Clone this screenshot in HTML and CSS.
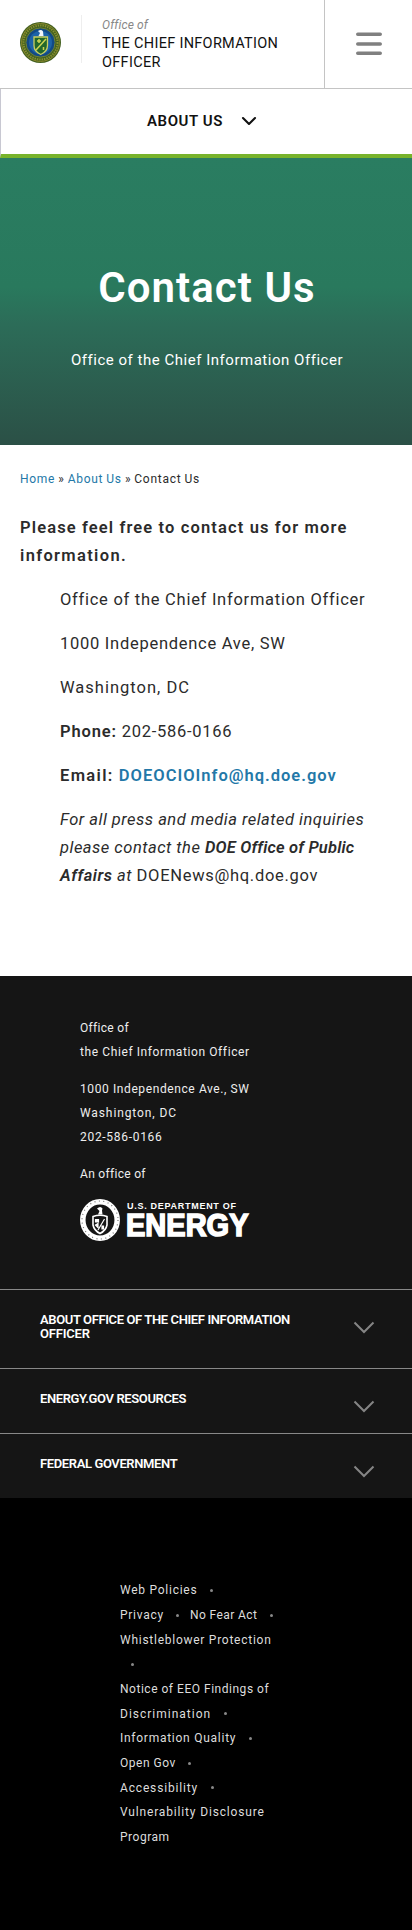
FILE: index.html
```html
<!DOCTYPE html>
<html lang="en">
<head>
<meta charset="utf-8">
<meta name="viewport" content="width=device-width, initial-scale=1">
<title>Contact Us</title>
<link rel="stylesheet" href="styles.css">
</head>
<body>
<header class="top">
  <a class="brand">
    <svg class="seal" viewBox="0 0 41 41">
      <circle cx="20.5" cy="20.5" r="20.5" fill="#43601f"/>
      <circle cx="20.5" cy="20.5" r="18.9" fill="none" stroke="#8d8a2c" stroke-width="1"/>
      <circle cx="20.5" cy="20.5" r="17" fill="none" stroke="#87902f" stroke-width="2" stroke-dasharray="1.4 1"/>
      <circle cx="20.5" cy="20.5" r="14.6" fill="#124a86" stroke="#6f8233" stroke-width="1"/>
      <circle cx="20.5" cy="20.5" r="11.5" fill="#1d63a8"/>
      <path d="M14 15h13.500v8.500q0 6-6.750 9q-6.750-3-6.750-9z" fill="#23682b" stroke="#c9cf62" stroke-width="1.300"/>
      <path d="M16 28L26 17M19 17v4M17 19h4M23.500 25v3" stroke="#cdd452" stroke-width="1.500" fill="none"/>
      <path d="M18 9q3.500-2 5 .5l.5 4.500h-5l1.500-3z" fill="#f1f5fa"/>
    </svg>
    <span class="rule"></span>
    <span class="name"><em>Office of</em><span class="title">THE CHIEF INFORMATION<br>OFFICER</span></span>
  </a>
  <button class="menu" aria-label="Menu"><svg width="26" height="24" viewBox="0 0 26 24"><path d="M1.800 2.300h22.400M1.800 12h22.400M1.800 21.300h22.400" stroke="#808080" stroke-width="3.600" stroke-linecap="round"/></svg></button>
</header>
<nav class="section-nav">
  <span>ABOUT US</span>
  <svg width="16" height="10" viewBox="0 0 16 10"><path d="M2 2l6 6 6-6" fill="none" stroke="#111" stroke-width="2.100" stroke-linecap="round" stroke-linejoin="round"/></svg>
</nav>
<section class="hero">
  <h1>Contact Us</h1>
  <p>Office of the Chief Information Officer</p>
</section>
<main class="content">
  <div class="crumbs"><a>Home</a> » <a>About Us</a> » <span>Contact Us</span></div>
  <p class="lead"><strong>Please feel free to contact us for more<br><span class="ls-13">information.</span></strong></p>
  <div class="indent">
    <p>Office of the Chief Information Officer</p>
    <p>1000 Independence Ave, SW</p>
    <p class="ls-10">Washington, DC</p>
    <p class="phone"><strong>Phone:</strong> 202-586-0166</p>
    <p><strong><span class="ls-13">Email:</span> <a class="ls-10">DOEOCIOInfo@hq.doe.gov</a></strong></p>
    <p class="press"><em>For all press and media related inquiries<br>please contact the <strong>DOE Office of Public<br><span class="ls-5">Affairs</span></strong> at</em> <span class="ls-7">DOENews@hq.doe.gov</span></p>
  </div>
</main>
<footer>
  <section class="office">
    <p><span class="ls-3">Office of</span><br>the Chief Information Officer</p>
    <p>1000 Independence Ave., SW<br><span class="ls-9">Washington, DC</span><br><span class="ls-7">202-586-0166</span></p>
    <p class="ls-3">An office of</p>
    <svg class="logo" width="170" height="42" viewBox="0 0 170 42">
      <ellipse cx="20" cy="21" rx="17.200" ry="18.200" fill="none" stroke="#fff" stroke-width="5.500"/>
      <ellipse cx="20" cy="21" rx="18" ry="19" fill="none" stroke="#777" stroke-width="1.200" stroke-dasharray="1 3.500"/>
      <path d="M13 17.500q7-2.500 14 0v8.500q-1 5.500-7 8.500q-6-3-7-8.500z" fill="#151515" stroke="#fff" stroke-width="1.600"/>
      <path d="M15.500 20.500h3v2.500h-3zM18 31l6.500-11M22 27h1.500v3H22zM15.500 26l2.500-1.500v4z" fill="#fff" stroke="#fff" stroke-width="1.200"/>
      <path d="M17 9.500q3.500-3 5.500 0l-.5 2 .5 4h-4.500l1.500-3.500z" fill="#fff"/>
      <text x="47" y="10" class="dept" textLength="109" lengthAdjust="spacing">U.S. DEPARTMENT OF</text>
      <text x="46" y="37.300" class="energy" textLength="122.500" lengthAdjust="spacingAndGlyphs">ENERGY</text>
    </svg>
  </section>
  <section class="fold two"><h2>ABOUT OFFICE OF THE CHIEF INFORMATION<br><span class="tail">OFFICER</span></h2><svg class="chev" viewBox="0 0 22 13"><path d="M1.500 1.500L11 11l9.500-9.500"/></svg></section>
  <section class="fold"><h2>ENERGY.GOV RESOURCES</h2><svg class="chev" viewBox="0 0 22 13"><path d="M1.500 1.500L11 11l9.500-9.500"/></svg></section>
  <section class="fold"><h2>FEDERAL GOVERNMENT</h2><svg class="chev" viewBox="0 0 22 13"><path d="M1.500 1.500L11 11l9.500-9.500"/></svg></section>
  <section class="legal">
    <div><a>Web Policies</a><i></i></div>
    <div><a>Privacy</a><i></i><a class="next ls-4">No Fear Act</a><i></i></div>
    <div><a>Whistleblower Protection</a></div>
    <div class="lone"><i></i></div>
    <div class="tight"><a class="ls-5">Notice of EEO Findings of</a></div>
    <div><a class="ls-10">Discrimination</a><i></i></div>
    <div><a>Information Quality</a><i></i></div>
    <div><a class="ls-5">Open Gov</a><i></i></div>
    <div><a class="ls-8">Accessibility</a><i></i></div>
    <div class="tight"><a class="ls-8">Vulnerability Disclosure</a></div>
    <div><a class="ls-5">Program</a></div>
  </section>
</footer>
</body>
</html>
```
FILE: styles.css
```css
* { box-sizing: border-box; }
body { margin: 0; background: #fff; color: #2b2b2b; font-family: Roboto, sans-serif; }
p, h1, h2 { margin: 0; }
strong { font-weight: 600; letter-spacing: 1.13px; }

.top { display: flex; height: 89px; border-bottom: 1px solid #c4c4c4; }
.brand { display: flex; width: 324px; padding-left: 20px; }
.seal { width: 41px; height: 41px; margin-top: 22px; }
.rule { width: 1px; height: 48px; margin: 15px 20px 0; background: #eee; }
.name { padding-top: 17px; }
.name em { display: block; font-size: 12px; line-height: 17px; letter-spacing: .13px; color: #888; }
.title { display: block; font-size: 14.5px; line-height: 19px; letter-spacing: .3px; color: #111; }
.menu { width: 88px; padding: 0 0 1px; border: 0; border-left: 1px solid #c4c4c4; background: none; }
.menu svg { display: block; margin: auto; }

.section-nav { display: flex; align-items: center; gap: 18px; height: 69px; padding: 0 0 2px 146px; border-left: 1px solid #c8c8d2; border-bottom: 4px solid #78b32b; color: #111; font-size: 15px; font-weight: 600; letter-spacing: .58px; }

.hero { height: 287px; padding: 94px 0 0 2px; text-align: center; color: #fff; background: linear-gradient(#2a7d61 0, #29795d 45%, #2c6c58 58%, #2b5046 100%); }
.hero h1 { font-size: 42px; line-height: 72px; font-weight: 600; letter-spacing: 1.05px; }
.hero p { margin-top: 23px; font-size: 15px; line-height: 26px; letter-spacing: .52px; }

.content { height: 531px; padding: 25px 20px 0; }
.crumbs { font-size: 12px; line-height: 18px; letter-spacing: .72px; word-spacing: -.6px; }
.content a { color: #2378a8; }
.content p { font-size: 16.5px; line-height: 28px; margin-bottom: 16px; letter-spacing: .73px; white-space: nowrap; }
.content .lead { margin-top: 26px; }
.indent { padding-left: 40px; }
.phone strong { letter-spacing: .85px; }
.content .press { letter-spacing: .5px; }
.press strong { letter-spacing: .18px; }

.office { height: 313px; padding: 40px 80px 0; background: #151515; color: #eee; font-size: 12px; line-height: 24px; letter-spacing: .6px; white-space: nowrap; }
.office p { margin-bottom: 13px; }
.logo { display: block; overflow: visible; letter-spacing: 0; line-height: 1; }
.dept { font: bold 9px "Liberation Sans", sans-serif; fill: #fff; }
.energy { font: bold 31px "Liberation Sans", sans-serif; fill: #fff; stroke: #fff; stroke-width: 1.6px; }

.fold { display: flex; justify-content: space-between; height: 65px; padding: 23px 37px 0 40px; border-top: 1px solid #888; background: #151515; color: #fff; }
.fold.two { height: 79px; }
.fold h2 { font-size: 13px; line-height: 14px; font-weight: 600; letter-spacing: -.38px; }
.fold .tail { letter-spacing: -.2px; }
.chev { width: 22px; height: 13px; margin-top: 8px; fill: none; stroke: #858585; stroke-width: 2px; }

.legal { height: 432px; padding: 80px 120px 0; background: #000; color: #ddd; font-size: 12px; letter-spacing: .74px; }
.legal div { display: flex; align-items: center; height: 24.75px; white-space: nowrap; }
.legal .tight { height: 24.2px; }
.legal i { width: 3px; height: 3px; border-radius: 50%; background: #888; margin-left: 12.5px; }
.legal .lone i { margin-left: 11px; }
.legal .next { margin-left: 10.5px; }

/* Tracking steps, in tenths of a pixel */
.ls-3 { letter-spacing: .3px; }
.ls-4 { letter-spacing: .4px; }
.ls-5 { letter-spacing: .52px; }
.ls-7 { letter-spacing: .7px; }
.ls-8 { letter-spacing: .84px; }
.ls-9 { letter-spacing: .9px; }
.content .ls-10, .ls-10 { letter-spacing: 1px; }
.ls-13 { letter-spacing: 1.34px; }
```
